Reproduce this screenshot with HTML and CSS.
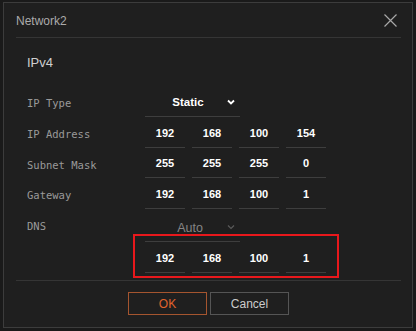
FILE: index.html
```html
<!DOCTYPE html>
<html lang="en">
<head>
    <meta charset="UTF-8">
    <title>Network2</title>
    <link rel="stylesheet" href="styles.css">
</head>
<body>
    <div class="dialog">
        <div class="dlg-head">
            <span class="dlg-title">Network2</span>
            <svg class="dlg-close" width="13" height="13" viewBox="0 0 13 13">
                <path d="M0.5 0.5 L12.5 12.5 M12.5 0.5 L0.5 12.5" stroke="#a8a8a8" stroke-width="1.2" fill="none"/>
            </svg>
        </div>
        <div class="dlg-body">
            <h2 class="section">IPv4</h2>
            <div class="row">
                <label class="lbl">IP Type</label>
                <div class="select">
                    <span class="sel-text">Static</span>
                    <svg class="chev" width="8" height="6" viewBox="0 0 8 6"><path d="M1 1.5 L4 4.5 L7 1.5" stroke="#fff" stroke-width="1.8" fill="none"/></svg>
                </div>
            </div>
            <div class="row">
                <label class="lbl">IP Address</label>
                <div class="fields">
                    <span class="field">192</span>
                    <span class="field">168</span>
                    <span class="field">100</span>
                    <span class="field">154</span>
                </div>
            </div>
            <div class="row">
                <label class="lbl">Subnet Mask</label>
                <div class="fields">
                    <span class="field">255</span>
                    <span class="field">255</span>
                    <span class="field">255</span>
                    <span class="field">0</span>
                </div>
            </div>
            <div class="row">
                <label class="lbl">Gateway</label>
                <div class="fields">
                    <span class="field">192</span>
                    <span class="field">168</span>
                    <span class="field">100</span>
                    <span class="field">1</span>
                </div>
            </div>
            <div class="row row-dns">
                <label class="lbl">DNS</label>
                <div class="select disabled">
                    <span class="sel-text">Auto</span>
                    <svg class="chev" width="8" height="6" viewBox="0 0 8 6"><path d="M1 1.5 L4 4.5 L7 1.5" stroke="#5a5a5a" stroke-width="1.2" fill="none"/></svg>
                </div>
            </div>
            <div class="row row-dns-ip">
                <span class="lbl"></span>
                <div class="fields">
                    <span class="field">192</span>
                    <span class="field">168</span>
                    <span class="field">100</span>
                    <span class="field">1</span>
                </div>
            </div>
            <div class="highlight"></div>
        </div>
        <div class="dlg-foot">
            <button class="btn btn-ok">OK</button>
            <button class="btn">Cancel</button>
        </div>
    </div>
</body>
</html>
```

FILE: styles.css
```css
body {
    margin: 0;
    background-color: #1a1a1a;
    font-family: "Liberation Sans", Arial, sans-serif;
}
.dialog {
    position: relative;
    box-sizing: border-box;
    width: 410px;
    height: 326px;
    margin: 2px 0 0 3px;
    background-color: #1f1f1f;
    border: 1px solid #3c3c3c;
}
.dlg-head {
    display: flex;
    align-items: center;
    justify-content: space-between;
    height: 34px;
    margin: 0 11px 0 12px;
    border-bottom: 1px solid #353535;
}
.dlg-title {
    color: #ababab;
    font-size: 12px;
    padding-top: 1px;
}
.dlg-close {
    margin-right: 4px;
    margin-top: 1px;
}
.dlg-body {
    position: relative;
    padding: 0 0 0 23px;
    height: 242px;
}
.section {
    margin: 0;
    padding-top: 17px;
    height: 33px;
    font-size: 13px;
    font-weight: normal;
    color: #cfcfcf;
}
.row {
    display: flex;
    align-items: center;
    height: 30.7px;
}
.lbl {
    width: 118px;
    font-family: "DejaVu Sans Mono", monospace;
    font-size: 10.5px;
    color: #9a9a9a;
}
.select {
    box-sizing: border-box;
    display: flex;
    align-items: center;
    width: 95px;
    height: 29px;
    border-bottom: 1px solid #3e3e3e;
    margin-bottom: 2px;
}
.sel-text {
    flex: 1;
    text-align: center;
    padding-left: 4px;
    color: #ffffff;
    font-size: 11.5px;
    font-weight: bold;
}
.chev {
    margin-right: 5px;
}
.fields {
    display: flex;
    gap: 7px;
}
.field {
    box-sizing: border-box;
    width: 40px;
    height: 29px;
    line-height: 28px;
    text-align: center;
    border-bottom: 1px solid #3e3e3e;
    color: #ffffff;
    font-size: 11px;
    font-weight: bold;
    margin-bottom: 2px;
}
.row-dns {
    align-items: flex-start;
    height: 33px;
}
.row-dns .lbl {
    padding-top: 9px;
}
.select.disabled {
    height: 31px;
}
.select.disabled .sel-text {
    color: #858585;
    font-weight: normal;
    font-size: 12.5px;
    padding-top: 5px;
    padding-left: 8px;
}
.select.disabled .chev {
    padding-top: 3px;
}
.highlight {
    position: absolute;
    left: 129px;
    top: 196px;
    width: 202px;
    height: 40px;
    border: 2px solid #e8181c;
}
.dlg-foot {
    display: flex;
    justify-content: center;
    gap: 3px;
    margin: 0 11px 0 12px;
    padding-top: 11px;
    border-top: 1px solid #353535;
}
.btn {
    box-sizing: border-box;
    width: 79px;
    height: 23px;
    background-color: #1f1f1f;
    border: 1px solid #555555;
    color: #cccccc;
    font-family: "Liberation Sans", Arial, sans-serif;
    font-size: 12px;
}
.btn-ok {
    border-color: #a5552f;
    color: #e0632c;
}
```
